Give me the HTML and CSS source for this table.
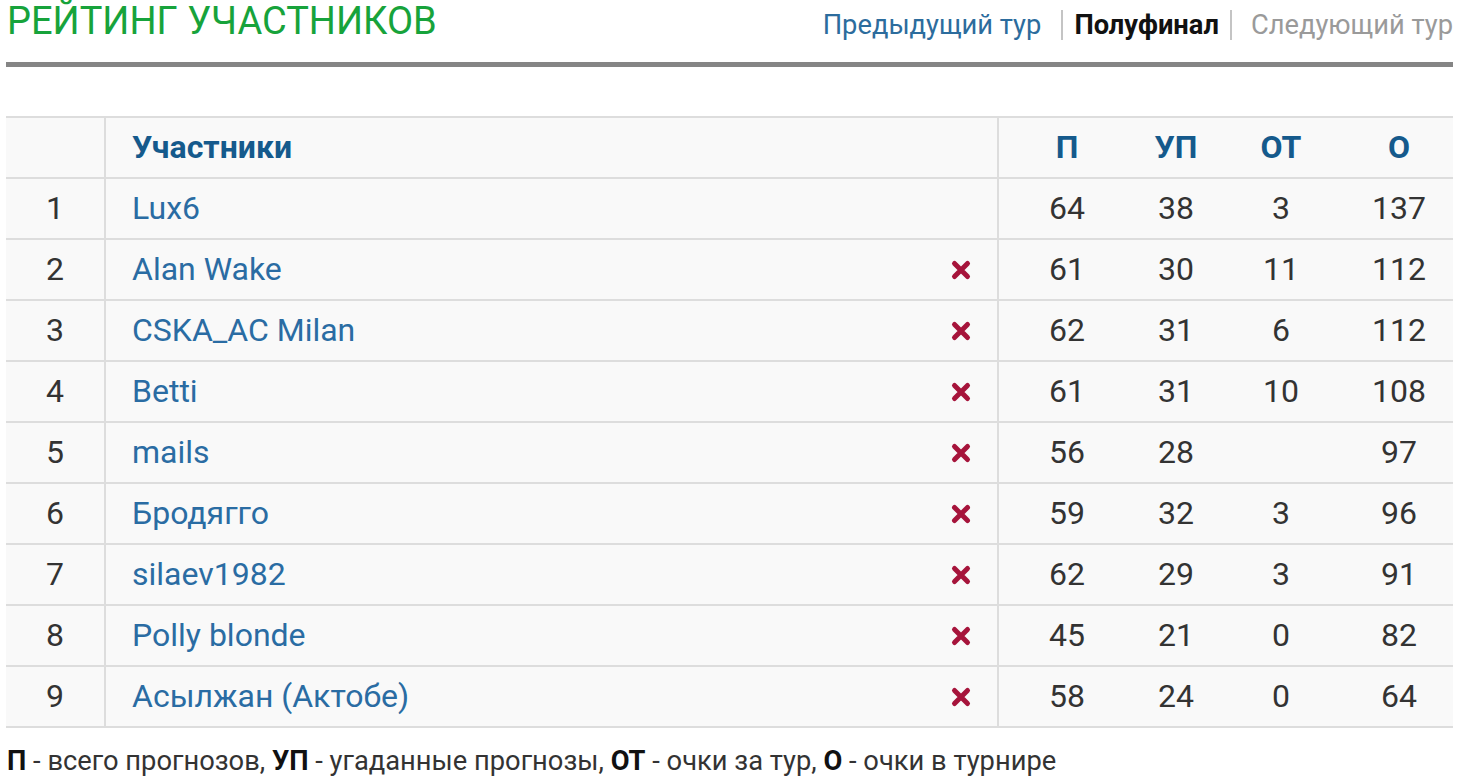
FILE: index.html
```html
<!DOCTYPE html>
<html lang="ru">
<head>
<meta charset="utf-8">
<title>Рейтинг участников</title>
<link rel="stylesheet" href="styles.css">
</head>
<body>
<div class="page">
  <div class="head">
    <h1 class="title">РЕЙТИНГ УЧАСТНИКОВ</h1>
    <nav class="tours">
      <a class="tour-link" href="#">Предыдущий тур</a>
      <span class="sep"></span>
      <span class="tour-current">Полуфинал</span>
      <span class="sep sep-tight"></span>
      <span class="tour-next">Следующий тур</span>
    </nav>
  </div>
  <div class="rule"></div>

  <table class="rating">
    <colgroup>
      <col class="w-rank"><col class="w-name"><col class="w-p"><col class="w-up"><col class="w-ot"><col class="w-o">
    </colgroup>
    <thead>
      <tr>
        <th class="c-rank"></th>
        <th class="c-name">Участники</th>
        <th>П</th>
        <th>УП</th>
        <th>ОТ</th>
        <th>О</th>
      </tr>
    </thead>
    <tbody>
      <tr><td class="c-rank">1</td><td class="c-name"><div class="name"><a href="#">Lux6</a></div></td><td>64</td><td>38</td><td>3</td><td>137</td></tr>
      <tr><td class="c-rank">2</td><td class="c-name"><div class="name"><a href="#">Alan Wake</a><span class="x"><svg viewBox="0 0 22 22" width="22" height="22"><path d="M4.5 4.5 L17.5 17.5 M17.5 4.5 L4.5 17.5" stroke="#a6143b" stroke-width="5" stroke-linecap="round"/></svg></span></div></td><td>61</td><td>30</td><td>11</td><td>112</td></tr>
      <tr><td class="c-rank">3</td><td class="c-name"><div class="name"><a href="#">CSKA_AC Milan</a><span class="x"><svg viewBox="0 0 22 22" width="22" height="22"><path d="M4.5 4.5 L17.5 17.5 M17.5 4.5 L4.5 17.5" stroke="#a6143b" stroke-width="5" stroke-linecap="round"/></svg></span></div></td><td>62</td><td>31</td><td>6</td><td>112</td></tr>
      <tr><td class="c-rank">4</td><td class="c-name"><div class="name"><a href="#">Betti</a><span class="x"><svg viewBox="0 0 22 22" width="22" height="22"><path d="M4.5 4.5 L17.5 17.5 M17.5 4.5 L4.5 17.5" stroke="#a6143b" stroke-width="5" stroke-linecap="round"/></svg></span></div></td><td>61</td><td>31</td><td>10</td><td>108</td></tr>
      <tr><td class="c-rank">5</td><td class="c-name"><div class="name"><a href="#">mails</a><span class="x"><svg viewBox="0 0 22 22" width="22" height="22"><path d="M4.5 4.5 L17.5 17.5 M17.5 4.5 L4.5 17.5" stroke="#a6143b" stroke-width="5" stroke-linecap="round"/></svg></span></div></td><td>56</td><td>28</td><td></td><td>97</td></tr>
      <tr><td class="c-rank">6</td><td class="c-name"><div class="name"><a href="#">Бродягго</a><span class="x"><svg viewBox="0 0 22 22" width="22" height="22"><path d="M4.5 4.5 L17.5 17.5 M17.5 4.5 L4.5 17.5" stroke="#a6143b" stroke-width="5" stroke-linecap="round"/></svg></span></div></td><td>59</td><td>32</td><td>3</td><td>96</td></tr>
      <tr><td class="c-rank">7</td><td class="c-name"><div class="name"><a href="#">silaev1982</a><span class="x"><svg viewBox="0 0 22 22" width="22" height="22"><path d="M4.5 4.5 L17.5 17.5 M17.5 4.5 L4.5 17.5" stroke="#a6143b" stroke-width="5" stroke-linecap="round"/></svg></span></div></td><td>62</td><td>29</td><td>3</td><td>91</td></tr>
      <tr><td class="c-rank">8</td><td class="c-name"><div class="name"><a href="#">Polly blonde</a><span class="x"><svg viewBox="0 0 22 22" width="22" height="22"><path d="M4.5 4.5 L17.5 17.5 M17.5 4.5 L4.5 17.5" stroke="#a6143b" stroke-width="5" stroke-linecap="round"/></svg></span></div></td><td>45</td><td>21</td><td>0</td><td>82</td></tr>
      <tr><td class="c-rank">9</td><td class="c-name"><div class="name"><a href="#">Асылжан (Актобе)</a><span class="x"><svg viewBox="0 0 22 22" width="22" height="22"><path d="M4.5 4.5 L17.5 17.5 M17.5 4.5 L4.5 17.5" stroke="#a6143b" stroke-width="5" stroke-linecap="round"/></svg></span></div></td><td>58</td><td>24</td><td>0</td><td>64</td></tr>
    </tbody>
  </table>

  <p class="legend"><b>П</b> - всего прогнозов, <b>УП</b> - угаданные прогнозы, <b>ОТ</b> - очки за тур, <b>О</b> - очки в турнире</p>
</div>
</body>
</html>
```

FILE: styles.css
```css
html, body {
  margin: 0;
  padding: 0;
  background: #ffffff;
}

body {
  font-family: Roboto, "Noto Sans", "Liberation Sans", sans-serif;
  color: #333333;
}

.page {
  width: 1447px;
  padding-left: 6px;
}

.head {
  display: flex;
  justify-content: space-between;
  align-items: flex-start;
  height: 42px;
}

.title {
  margin: 0;
  padding-left: 1px;
  font-size: 38px;
  line-height: 42px;
  font-weight: 400;
  color: #17a33b;
}

.tours {
  display: flex;
  align-items: center;
  font-size: 27.3px;
  line-height: 32px;
  margin-top: 9px;
}

.tour-link {
  color: #2c6c9d;
  text-decoration: none;
}

.tour-current {
  color: #111111;
  font-weight: 700;
}

.tour-next {
  color: #9a9a9a;
}

.sep {
  width: 2px;
  height: 30px;
  background: #c4c4c4;
  margin: 0 11px 0 20px;
}

.sep-tight {
  margin: 0 19px 0 11px;
}

.rule {
  margin-top: 20px;
  height: 5px;
  background: #858585;
}

.rating {
  margin-top: 49px;
  width: 1447px;
  border-collapse: separate;
  border-spacing: 0;
  background: #f9f9f9;
  border-top: 2px solid #dddddd;
  font-size: 32px;
  table-layout: fixed;
}

.w-rank { width: 100px; }
.w-name { width: 893px; }
.w-p { width: 136px; }
.w-up { width: 82px; }
.w-ot { width: 128px; }
.w-o { width: 108px; }

.rating th,
.rating td {
  padding: 0;
  height: 59px;
  line-height: 59px;
  border-bottom: 2px solid #dddddd;
  white-space: nowrap;
  text-align: center;
  vertical-align: middle;
}

.rating th {
  font-weight: 700;
  color: #155a8c;
}

.rating td {
  color: #333333;
}

.c-rank {
  border-right: 2px solid #dddddd;
}

.rating .c-name {
  text-align: left;
  padding: 0 25px 0 26px;
  border-right: 2px solid #dddddd;
}

.name {
  display: flex;
  justify-content: space-between;
  align-items: center;
}

.name a {
  color: #2a6ca3;
  text-decoration: none;
}

.x {
  display: flex;
  width: 22px;
  height: 22px;
}

.legend {
  margin: 17px 0 0 1px;
  font-size: 27.3px;
  line-height: 32px;
  color: #333333;
}

.legend b {
  color: #111111;
}
```
